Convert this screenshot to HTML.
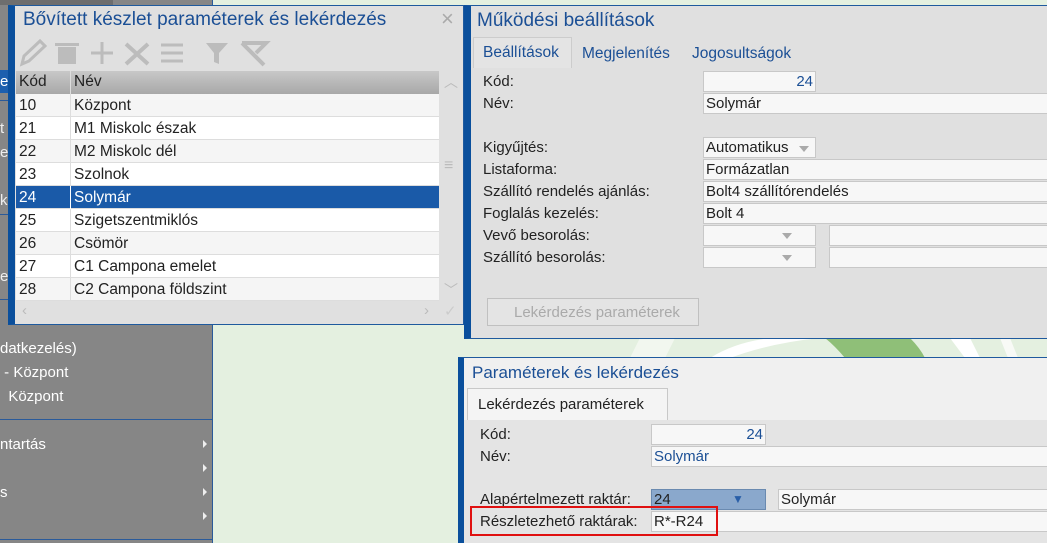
<!DOCTYPE html>
<html><head><meta charset="utf-8"><style>
*{margin:0;padding:0;box-sizing:border-box}
html,body{width:1047px;height:543px;overflow:hidden}
body{position:relative;background:#e4f0e0;font-family:"Liberation Sans",sans-serif;font-size:15px;color:#222}
.a{position:absolute}
.side{left:0;top:0;width:213px;height:543px;background:#868686;border-right:1px solid #2a5a9a}
.st{color:#fff;font-size:15px;position:absolute;left:0;white-space:nowrap}
.hl{background:#1c5fae;position:absolute}
.sl{position:absolute;left:0;width:212px;height:1px;background:#2a5a9a}
.arr{position:absolute;left:203px;width:0;height:0;border-left:4px solid #eee;border-top:4px solid transparent;border-bottom:4px solid transparent}
.panel{background:#e0e0e0;border:1px solid #1f5a9e;border-left:7px solid #0a4f9c}
.title{color:#1b4f95;font-size:19px;position:absolute;white-space:nowrap}
.row{position:absolute;left:16px;width:423px;height:23px;border-bottom:1px solid #ddd;background:#fff;font-size:15.5px}
.row span{position:absolute;top:3px}
.c1{left:3px}.c2{left:58px}
.vl{position:absolute;left:54px;top:0;width:1px;height:23px;background:#ddd}
.lbl{position:absolute;white-space:nowrap;color:#222}
.inp{position:absolute;background:#f7f7f7;border:1px solid #c8c8c8;height:21px;padding:1px 2px;white-space:nowrap}
.blue{color:#1b4f95}
.tri{display:inline-block;width:0;height:0;border-left:5px solid transparent;border-right:5px solid transparent;border-top:6px solid #aaa}
</style></head><body>
<div class="a side"></div>
<div class="a" style="left:0;top:0;width:113px;height:5px;background:#6e6e6e"></div>
<div class="hl" style="left:0;top:70px;width:10px;height:23px"></div>
<div class="st" style="left:0;top:73px;">et</div>
<div class="sl" style="top:100px"></div>
<div class="st" style="top:120px;color:#eee">t</div>
<div class="st" style="top:144px;color:#eee">ele</div>
<div class="st" style="top:192px;color:#eee">k</div>
<div class="sl" style="top:214px"></div>
<div class="st" style="top:268px;color:#eee">e</div>
<div class="sl" style="top:299px"></div>
<div class="st" style="top:340px">datkezelés)</div>
<div class="st" style="top:364px">&nbsp;- Központ</div>
<div class="st" style="top:388px">&nbsp;&nbsp;Központ</div>
<div class="sl" style="top:419px"></div>
<div class="st" style="top:436px">ntartás</div><div class="arr" style="top:440px"></div>
<div class="arr" style="top:464px"></div>
<div class="st" style="top:484px">s</div><div class="arr" style="top:488px"></div>
<div class="arr" style="top:512px"></div>
<div class="sl" style="top:539px"></div>

<svg class="a" style="left:600px;top:338px" width="447" height="20"><path d="M30 20 L40 0 L75 0 L65 20Z" fill="#f2f7ef"/><path d="M110 20 Q150 -5 210 0 L220 0 Q170 5 130 20Z" fill="#fff"/><path d="M225 0 L310 0 Q320 10 325 20 L245 20 Q235 8 225 0Z" fill="#8fbf78"/><path d="M350 0 L370 0 L380 20 L365 20Z" fill="#fff"/><path d="M400 0 L410 0 L418 20 L408 20Z" fill="#f8faf6"/></svg>

<div class="a panel" style="left:8px;top:5px;width:456px;height:320px"></div>
<div class="title" style="left:23px;top:9px">Bővített készlet paraméterek és lekérdezés</div>
<div class="a" style="left:441px;top:6px;font-size:22px;color:#aaa">×</div>
<svg class="a" style="left:18px;top:38px" width="260" height="30" fill="none" stroke="#bcbcbc" stroke-width="3">
<path d="M4 26 L6 18 L22 3 L27 8 L11 23Z"/>
<rect x="40" y="9" width="18" height="17" fill="#bcbcbc" stroke="none"/><rect x="37" y="5" width="24" height="3" fill="#bcbcbc" stroke="none"/>
<path d="M84 4 V26 M73 15 H95"/>
<path d="M108 6 L130 26 M130 6 L108 26" stroke-width="4"/>
<path d="M143 7 H165 M143 15 H165 M143 23 H165"/>
<path d="M188 5 H210 L201 15 V26 L196 24 V15Z" fill="#bcbcbc" stroke="none"/>
<path d="M224 5 L246 27 M224 5 H248 L238 15" stroke-width="4"/>
</svg>
<div class="a" style="left:16px;top:71px;width:423px;height:23px;background:linear-gradient(#c8c8c8,#a8a8a8)"></div>
<div class="a" style="left:19px;top:73px;font-size:15.5px">Kód</div><div class="a" style="left:74px;top:73px;font-size:15.5px">Név</div>
<div class="a" style="left:70px;top:71px;width:1px;height:23px;background:#ddd"></div>
<div class="row" style="top:94px;background:#f5f5f5"><span class="c1">10</span><span class="c2">Központ</span><i class="vl"></i></div>
<div class="row" style="top:117px;background:#fff"><span class="c1">21</span><span class="c2">M1 Miskolc észak</span><i class="vl"></i></div>
<div class="row" style="top:140px;background:#f5f5f5"><span class="c1">22</span><span class="c2">M2 Miskolc dél</span><i class="vl"></i></div>
<div class="row" style="top:163px;background:#fff"><span class="c1">23</span><span class="c2">Szolnok</span><i class="vl"></i></div>
<div class="row" style="top:186px;background:#1a5aa8;color:#fff"><span class="c1">24</span><span class="c2">Solymár</span><i class="vl" style="background:#fff"></i></div>
<div class="row" style="top:209px;background:#fff"><span class="c1">25</span><span class="c2">Szigetszentmiklós</span><i class="vl"></i></div>
<div class="row" style="top:232px;background:#f5f5f5"><span class="c1">26</span><span class="c2">Csömör</span><i class="vl"></i></div>
<div class="row" style="top:255px;background:#fff"><span class="c1">27</span><span class="c2">C1 Campona emelet</span><i class="vl"></i></div>
<div class="row" style="top:278px;background:#f5f5f5"><span class="c1">28</span><span class="c2">C2 Campona földszint</span><i class="vl"></i></div>
<div class="a" style="left:444px;top:72px;color:#bbb;font-size:14px">︿</div>
<div class="a" style="left:444px;top:157px;color:#bbb;font-size:16px">≡</div>
<div class="a" style="left:444px;top:280px;color:#bbb;font-size:14px">﹀</div>
<div class="a" style="left:22px;top:302px;color:#bbb">‹</div>
<div class="a" style="left:424px;top:302px;color:#bbb">›</div>
<div class="a" style="left:444px;top:302px;color:#ccc">✓</div>

<div class="a panel" style="left:464px;top:5px;width:590px;height:334px"></div>
<div class="title" style="left:477px;top:10px">Működési beállítások</div>
<div class="a" style="left:473px;top:37px;width:99px;height:31px;border:1px solid #ccc;border-bottom:none;background:#e4e4e4"></div>
<div class="a blue" style="left:483px;top:44px;font-size:15.5px">Beállítások</div>
<div class="a blue" style="left:582px;top:45px;font-size:15.5px">Megjelenítés</div>
<div class="a blue" style="left:692px;top:45px;font-size:15.5px">Jogosultságok</div>
<div class="lbl" style="left:483px;top:73px">Kód:</div>
<div class="inp blue" style="left:703px;top:71px;width:113px;text-align:right">24</div>
<div class="lbl" style="left:483px;top:95px">Név:</div>
<div class="inp" style="left:703px;top:93px;width:350px">Solymár</div>
<div class="lbl" style="left:483px;top:139px">Kigyűjtés:</div>
<div class="inp" style="left:703px;top:137px;width:113px">Automatikus <span class="tri" style="margin-left:6px"></span></div>
<div class="lbl" style="left:483px;top:161px">Listaforma:</div>
<div class="inp" style="left:703px;top:159px;width:350px">Formázatlan</div>
<div class="lbl" style="left:483px;top:183px">Szállító rendelés ajánlás:</div>
<div class="inp" style="left:703px;top:181px;width:350px">Bolt4 szállítórendelés</div>
<div class="lbl" style="left:483px;top:205px">Foglalás kezelés:</div>
<div class="inp" style="left:703px;top:203px;width:350px">Bolt 4</div>
<div class="lbl" style="left:483px;top:227px">Vevő besorolás:</div>
<div class="inp" style="left:703px;top:225px;width:113px"><span class="tri" style="position:absolute;left:78px;top:7px"></span></div>
<div class="inp" style="left:829px;top:225px;width:230px"></div>
<div class="lbl" style="left:483px;top:249px">Szállító besorolás:</div>
<div class="inp" style="left:703px;top:247px;width:113px"><span class="tri" style="position:absolute;left:78px;top:7px"></span></div>
<div class="inp" style="left:829px;top:247px;width:230px"></div>
<div class="a" style="left:487px;top:298px;width:212px;height:28px;border:1px solid #c0c0c0;background:#e4e4e4;color:#aaa;padding:5px 0 0 26px">Lekérdezés paraméterek</div>

<div class="a" style="left:458px;top:357px;width:600px;height:186px;background:#f0f0f0;border-top:1px solid #1f5a9e;border-left:6px solid #0a4f9c"></div>
<div class="title" style="left:472px;top:363px;font-size:17px">Paraméterek és lekérdezés</div>
<div class="a" style="left:467px;top:388px;height:32px;border:1px solid #c8c8c8;border-bottom:none;background:#f4f4f4;width:201px"></div>
<div class="a" style="left:478px;top:396px">Lekérdezés paraméterek</div>
<div class="a" style="left:464px;top:420px;width:590px;height:123px;background:#e4e4e4"></div>
<div class="lbl" style="left:480px;top:426px">Kód:</div>
<div class="inp blue" style="left:651px;top:424px;width:115px;text-align:right">24</div>
<div class="lbl" style="left:480px;top:448px">Név:</div>
<div class="inp blue" style="left:651px;top:446px;width:400px">Solymár</div>
<div class="lbl" style="left:480px;top:491px">Alapértelmezett raktár:</div>
<div class="inp" style="left:651px;top:489px;width:115px;background:#8aa8cc;border-color:#6a8ab0">24<span class="a" style="left:80px;top:2px;color:#2a5fa8;font-size:12px">▼</span></div>
<div class="inp" style="left:778px;top:489px;width:280px">Solymár</div>
<div class="lbl" style="left:480px;top:513px">Részletezhető raktárak:</div>
<div class="inp" style="left:651px;top:511px;width:400px">R*-R24</div>
<div class="a" style="left:470px;top:506px;width:248px;height:30px;border:2px solid #e01010"></div>
</body></html>
